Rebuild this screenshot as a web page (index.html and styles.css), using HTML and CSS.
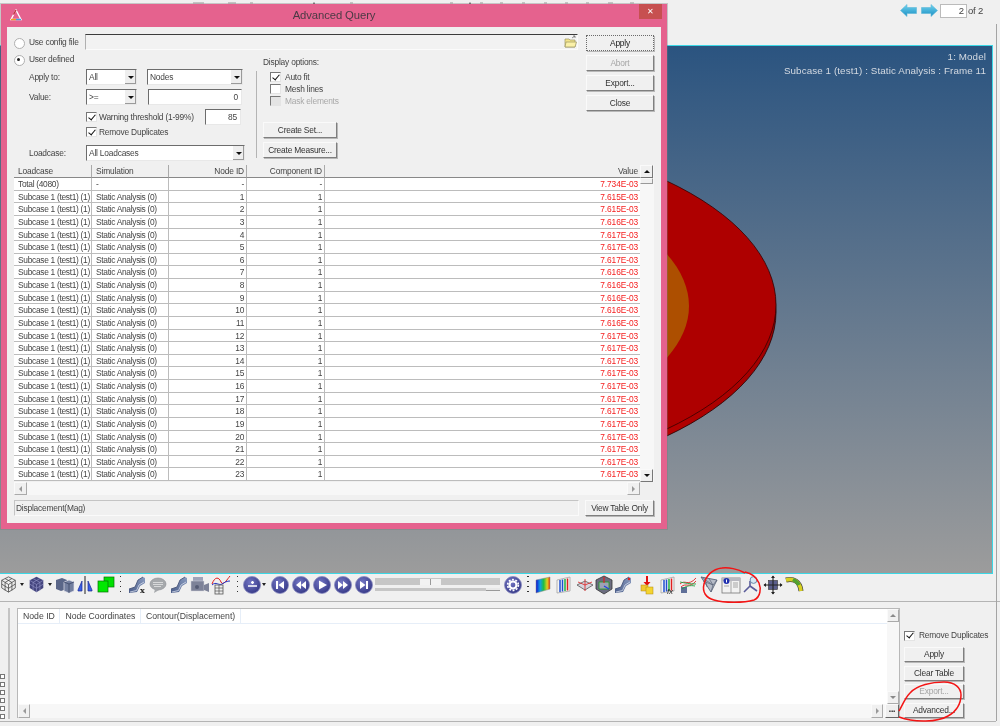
FILE: index.html
```html
<!DOCTYPE html>
<html lang="en">
<head>
<meta charset="utf-8">
<title>Advanced Query</title>
<link rel="stylesheet" href="styles.css">
</head>
<body>
<svg class="defs" aria-hidden="true">
  <defs>
    <radialGradient id="navy" cx="40%" cy="35%" r="75%"><stop offset="0" stop-color="#7376c4"/><stop offset="1" stop-color="#2f3280"/></radialGradient>
    <linearGradient id="rainbow" x1="0" x2="1" y1="0" y2="0"><stop offset="0" stop-color="#1010d0"/><stop offset=".3" stop-color="#10a0e0"/><stop offset=".55" stop-color="#20c040"/><stop offset=".8" stop-color="#e0d020"/><stop offset="1" stop-color="#e03010"/></linearGradient>
    <linearGradient id="arrow" x1="0" x2="0" y1="0" y2="1"><stop offset="0" stop-color="#6fd3ee"/><stop offset="1" stop-color="#1c8fc4"/></linearGradient>
    <linearGradient id="slate" x1="0" x2="1" y1="1" y2="0"><stop offset="0" stop-color="#4a5c88"/><stop offset="1" stop-color="#8a9cc0"/></linearGradient>
    <linearGradient id="rim" x1="0" x2="1" y1="0" y2="0"><stop offset=".6" stop-color="#d80000"/><stop offset="1" stop-color="#a00000"/></linearGradient>
    <symbol id="disc" viewBox="0 0 20 20"><circle cx="10" cy="10" r="8.5" fill="url(#navy)" stroke="#8a8cc0" stroke-width=".8"/></symbol>
    <symbol id="ramp" viewBox="0 0 20 20"><path d="M2 18 L2 14 L8 12 L11 5 L16 2 L18 3 L18 8 L13 11 L10 17 Z" fill="url(#slate)"/><path d="M2 14 L8 12 L11 5 L16 2" fill="none" stroke="#3c4a70" stroke-width=".8"/><path d="M3 17 L9.500 15.500 L12 10 L17 7" fill="none" stroke="#c8d0e2" stroke-width=".9"/></symbol>
    <symbol id="bars" viewBox="0 0 20 20"><path d="M3 5 L16 2 V16 L3 18 Z" fill="#f4f4f4" stroke="#999" stroke-width=".7"/><path d="M6 5 V17 M8.500 4.500 V16.500" stroke="#2050d0" stroke-width="1.500"/><path d="M11 4 V16" stroke="#20b040" stroke-width="1.500"/><path d="M13.500 3.500 V15.500" stroke="#e02020" stroke-width="1.500"/></symbol>
  </defs>
</svg>

<header class="topbar">
  <div class="pager">
    <svg class="pager-arrow" viewBox="0 0 17 13"><path d="M0.500 6.500 L7 .5 V3.500 H16.500 V9.500 H7 V12.500 Z" fill="url(#arrow)" stroke="#5fb8d8" stroke-width=".6"/></svg>
    <svg class="pager-arrow" viewBox="0 0 17 13"><path d="M16.500 6.500 L10 .5 V3.500 H.5 V9.500 H10 V12.500 Z" fill="url(#arrow)" stroke="#5fb8d8" stroke-width=".6"/></svg>
    <span class="pager-input">2</span>
    <span class="pager-of">of 2</span>
  </div>
</header>

<main class="viewport">
  <svg class="model" viewBox="0 0 992 527" aria-hidden="true">
    <ellipse cx="400" cy="266" rx="376" ry="176" fill="url(#rim)" stroke="#200" stroke-width=".8"/>
    <ellipse cx="400" cy="259" rx="376" ry="176" fill="#ae0000" stroke="#300" stroke-width=".8"/>
    <ellipse cx="400" cy="260" rx="289" ry="135" fill="#ad4f00"/>
  </svg>
  <div class="viewport-label">
    <div>1: Model</div>
    <div>Subcase 1 (test1) : Static Analysis : Frame 11</div>
  </div>
</main>

<section class="dialog">
  <div class="dialog-title">
    <svg class="dialog-logo" viewBox="0 0 12 12"><path d="M6 1 L11 10.500 H1 Z" fill="none" stroke="#fff" stroke-width="1.400"/><path d="M6 1 L3.500 5.700" stroke="#c03040" stroke-width="1.400"/><path d="M1 10.500 H6" stroke="#f0a020" stroke-width="1.400"/><path d="M6 10.500 H11" stroke="#40a0e0" stroke-width="1.400"/></svg>
    <span class="dialog-name">Advanced Query</span>
    <span class="dialog-close">✕</span>
  </div>
  <div class="dialog-client">
    <div class="upper">
      <div class="upper-main">
        <div class="config-row">
          <span class="radio"></span>
          <span class="config-label">Use config file</span>
          <div class="field config-field">
            <svg class="folder" viewBox="0 0 13 13"><path d="M1 4 H5 L6 5 H11 V12 H1 Z" fill="#f4e58a" stroke="#9a9460" stroke-width=".7"/><path d="M2 7 H12.500 L11 12 H1 Z" fill="#fbf1a8" stroke="#9a9460" stroke-width=".7"/><path d="M8 3 L11 1 M11 1 V3 M11 1 H9" stroke="#666" stroke-width=".7" fill="none"/></svg>
          </div>
        </div>
        <div class="form-split">
          <div class="form-left">
            <div class="userdef-row"><span class="radio on"></span><span>User defined</span></div>
            <div class="form-row r20">
              <span class="form-label">Apply to:</span>
              <div class="select s51"><span>All</span><i class="drop"></i></div>
              <div class="select s96"><span>Nodes</span><i class="drop"></i></div>
            </div>
            <div class="form-row r20">
              <span class="form-label">Value:</span>
              <div class="select s51"><span>&gt;=</span><i class="drop"></i></div>
              <div class="field num s94">0</div>
            </div>
            <div class="form-row r17">
              <span class="form-label"></span>
              <label class="check wide"><i class="box on"></i><span>Warning threshold (1-99%)</span></label>
              <div class="field num s36">85</div>
            </div>
            <div class="form-row r19">
              <span class="form-label"></span>
              <label class="check"><i class="box on"></i><span>Remove Duplicates</span></label>
            </div>
            <div class="form-row">
              <span class="form-label">Loadcase:</span>
              <div class="select s159"><span>All Loadcases</span><i class="drop"></i></div>
            </div>
          </div>
          <div class="form-divider"></div>
          <div class="options">
            <div class="options-title">Display options:</div>
            <div class="options-checks">
              <label class="check"><i class="box on"></i><span>Auto fit</span></label>
              <label class="check"><i class="box"></i><span>Mesh lines</span></label>
              <label class="check disabled"><i class="box dis"></i><span>Mask elements</span></label>
            </div>
            <div class="options-buttons">
              <button class="btn">Create Set...</button>
              <button class="btn">Create Measure...</button>
            </div>
          </div>
        </div>
      </div>
      <div class="upper-side">
        <button class="btn focus">Apply</button>
        <button class="btn off">Abort</button>
        <button class="btn">Export...</button>
        <button class="btn">Close</button>
      </div>
    </div>

    <div class="results">
      <div class="results-main">
        <div class="results-table">
          <div class="tr head"><div>Loadcase</div><div>Simulation</div><div class="n">Node ID</div><div class="n">Component ID</div><div class="n">Value</div></div>
          <div class="tr"><div>Total (4080)</div><div>-</div><div class="n">-</div><div class="n">-</div><div class="v">7.734E-03</div></div>
          <div class="tr"><div>Subcase 1 (test1) (1)</div><div>Static Analysis (0)</div><div class="n">1</div><div class="n">1</div><div class="v">7.615E-03</div></div>
          <div class="tr"><div>Subcase 1 (test1) (1)</div><div>Static Analysis (0)</div><div class="n">2</div><div class="n">1</div><div class="v">7.615E-03</div></div>
          <div class="tr"><div>Subcase 1 (test1) (1)</div><div>Static Analysis (0)</div><div class="n">3</div><div class="n">1</div><div class="v">7.616E-03</div></div>
          <div class="tr"><div>Subcase 1 (test1) (1)</div><div>Static Analysis (0)</div><div class="n">4</div><div class="n">1</div><div class="v">7.617E-03</div></div>
          <div class="tr"><div>Subcase 1 (test1) (1)</div><div>Static Analysis (0)</div><div class="n">5</div><div class="n">1</div><div class="v">7.617E-03</div></div>
          <div class="tr"><div>Subcase 1 (test1) (1)</div><div>Static Analysis (0)</div><div class="n">6</div><div class="n">1</div><div class="v">7.617E-03</div></div>
          <div class="tr"><div>Subcase 1 (test1) (1)</div><div>Static Analysis (0)</div><div class="n">7</div><div class="n">1</div><div class="v">7.616E-03</div></div>
          <div class="tr"><div>Subcase 1 (test1) (1)</div><div>Static Analysis (0)</div><div class="n">8</div><div class="n">1</div><div class="v">7.616E-03</div></div>
          <div class="tr"><div>Subcase 1 (test1) (1)</div><div>Static Analysis (0)</div><div class="n">9</div><div class="n">1</div><div class="v">7.616E-03</div></div>
          <div class="tr"><div>Subcase 1 (test1) (1)</div><div>Static Analysis (0)</div><div class="n">10</div><div class="n">1</div><div class="v">7.616E-03</div></div>
          <div class="tr"><div>Subcase 1 (test1) (1)</div><div>Static Analysis (0)</div><div class="n">11</div><div class="n">1</div><div class="v">7.616E-03</div></div>
          <div class="tr"><div>Subcase 1 (test1) (1)</div><div>Static Analysis (0)</div><div class="n">12</div><div class="n">1</div><div class="v">7.617E-03</div></div>
          <div class="tr"><div>Subcase 1 (test1) (1)</div><div>Static Analysis (0)</div><div class="n">13</div><div class="n">1</div><div class="v">7.617E-03</div></div>
          <div class="tr"><div>Subcase 1 (test1) (1)</div><div>Static Analysis (0)</div><div class="n">14</div><div class="n">1</div><div class="v">7.617E-03</div></div>
          <div class="tr"><div>Subcase 1 (test1) (1)</div><div>Static Analysis (0)</div><div class="n">15</div><div class="n">1</div><div class="v">7.617E-03</div></div>
          <div class="tr"><div>Subcase 1 (test1) (1)</div><div>Static Analysis (0)</div><div class="n">16</div><div class="n">1</div><div class="v">7.617E-03</div></div>
          <div class="tr"><div>Subcase 1 (test1) (1)</div><div>Static Analysis (0)</div><div class="n">17</div><div class="n">1</div><div class="v">7.617E-03</div></div>
          <div class="tr"><div>Subcase 1 (test1) (1)</div><div>Static Analysis (0)</div><div class="n">18</div><div class="n">1</div><div class="v">7.617E-03</div></div>
          <div class="tr"><div>Subcase 1 (test1) (1)</div><div>Static Analysis (0)</div><div class="n">19</div><div class="n">1</div><div class="v">7.617E-03</div></div>
          <div class="tr"><div>Subcase 1 (test1) (1)</div><div>Static Analysis (0)</div><div class="n">20</div><div class="n">1</div><div class="v">7.617E-03</div></div>
          <div class="tr"><div>Subcase 1 (test1) (1)</div><div>Static Analysis (0)</div><div class="n">21</div><div class="n">1</div><div class="v">7.617E-03</div></div>
          <div class="tr"><div>Subcase 1 (test1) (1)</div><div>Static Analysis (0)</div><div class="n">22</div><div class="n">1</div><div class="v">7.617E-03</div></div>
          <div class="tr"><div>Subcase 1 (test1) (1)</div><div>Static Analysis (0)</div><div class="n">23</div><div class="n">1</div><div class="v">7.617E-03</div></div>
        </div>
        <div class="vscroll">
          <span class="sb-btn"><i class="tri up"></i></span>
          <span class="sb-thumb"></span>
          <span class="sb-track"></span>
          <span class="sb-btn"><i class="tri down"></i></span>
        </div>
      </div>
      <div class="hscroll">
        <span class="sb-btn flat"><i class="tri left"></i></span>
        <span class="sb-track"></span>
        <span class="sb-btn flat"><i class="tri right"></i></span>
        <span class="corner"></span>
      </div>
    </div>

    <div class="dialog-foot">
      <div class="status">Displacement(Mag)</div>
      <button class="btn">View Table Only</button>
    </div>
  </div>
</section>

<nav class="toolbar">
  <span class="t w16"><svg viewBox="0 0 20 20"><path d="M10 1 L18 5 V14 L10 19 L2 14 V5 Z M2 5 L10 10 L18 5 M10 10 V19 M6 3 L14 7.500 M14 3 L6 7.500 M2 9.500 L10 14.500 L18 9.500 M6 7.500 V17 M14 7.500 V17" fill="#e4e4e4" fill-opacity=".4" stroke="#444" stroke-width=".9"/></svg></span>
  <span class="t w12"><i class="caret"></i></span>
  <span class="t w16"><svg viewBox="0 0 20 20"><path d="M10 1 L18 5 V14 L10 19 L2 14 V5 Z" fill="#45467f"/><path d="M2 5 L10 10 L18 5 M10 10 V19 M6 3 L14 7.500 M14 3 L6 7.500 M2 9.500 L10 14.500 L18 9.500 M6 7.500 V17 M14 7.500 V17" fill="none" stroke="#8f90c4" stroke-width=".8"/></svg></span>
  <span class="t w12"><i class="caret"></i></span>
  <span class="t w17"><svg viewBox="0 0 20 20"><path d="M1 5 L7 3 L12 5 V14 L6 16 L1 14 Z" fill="#5a6688"/><path d="M9 7 L14 5 L19 7 V16 L14 18 L9 16 Z" fill="#737f9f" stroke="#e4e4ee" stroke-width=".7"/><path d="M9 7 L14 9 L19 7 M14 9 V18" fill="none" stroke="#3b4666" stroke-width=".8"/></svg></span>
  <span class="t w24"><svg viewBox="0 0 20 20"><path d="M7 6 L3 15 V16 H7 Z" fill="#3a60e8" stroke="#1a2a90" stroke-width=".7"/><path d="M13 6 L17 15 V16 H13 Z" fill="#3a60e8" stroke="#1a2a90" stroke-width=".7"/><path d="M10 1 V19" stroke="#222" stroke-width="1"/></svg></span>
  <span class="t w18"><svg viewBox="0 0 20 20"><rect x="8" y="2" width="10" height="10" fill="#00e000" stroke="#067006" stroke-width=".7"/><rect x="2" y="6" width="10" height="11" fill="#00e800" stroke="#067006" stroke-width=".7"/></svg></span>
  <span class="t w11"><i class="dots"></i></span>
  <span class="t"><svg viewBox="0 0 20 20"><use href="#ramp"/><text x="13" y="18" class="svg-x">x</text></svg></span>
  <span class="t"><svg viewBox="0 0 20 20"><ellipse cx="10" cy="9" rx="8" ry="6" fill="#a6a9ac" stroke="#8a8c90" stroke-width=".6"/><path d="M7 14 L6 18 L11 15 Z" fill="#a6a9ac"/><path d="M5 7.500 H15 M5 9.500 H15 M6 11.500 H13" stroke="#eee" stroke-width=".7"/></svg></span>
  <span class="t"><svg viewBox="0 0 20 20"><use href="#ramp"/></svg></span>
  <span class="t"><svg viewBox="0 0 20 20"><rect x="3" y="2" width="10" height="8" fill="#9ea3b8"/><rect x="1" y="6" width="13" height="10" fill="#7d8298" stroke="#d4d4dc" stroke-width=".5"/><path d="M14 10 L19 8 V17 L14 15 Z" fill="#7d8298"/><circle cx="7" cy="12" r="2" fill="#555b74"/></svg></span>
  <span class="t"><svg viewBox="0 0 20 20"><path d="M1 9 C4 1 8 2 10 7 C12 11 15 6 19 1" fill="none" stroke="#e01818" stroke-width="1"/><path d="M1 10 C5 6 8 11 11 9 C14 7 16 6 19 6" fill="none" stroke="#2030c0" stroke-width="1"/><rect x="4" y="10" width="8" height="9" fill="#eee" stroke="#555" stroke-width=".8"/><path d="M8 10 V19 M4 13 H12 M4 16 H12" stroke="#555" stroke-width=".7"/></svg></span>
  <span class="t w13"><i class="dots"></i></span>
  <span class="t w15"><svg viewBox="0 0 20 20"><use href="#disc"/><path d="M6 11 H15 M9 7.500 H12 M10.500 6 V9" stroke="#fff" stroke-width="1.400"/></svg></span>
  <span class="t w10"><i class="caret"></i></span>
  <span class="t"><svg viewBox="0 0 20 20"><use href="#disc"/><path d="M6 6 H8 V14 H6 Z M14 6 V14 L8.500 10 Z" fill="#fff"/></svg></span>
  <span class="t"><svg viewBox="0 0 20 20"><use href="#disc"/><path d="M10 6 V14 L5 10 Z M15 6 V14 L10 10 Z" fill="#fff"/></svg></span>
  <span class="t"><svg viewBox="0 0 20 20"><use href="#disc"/><path d="M7 5.500 V14.500 L15 10 Z" fill="#fff"/></svg></span>
  <span class="t"><svg viewBox="0 0 20 20"><use href="#disc"/><path d="M10 6 V14 L15 10 Z M5 6 V14 L10 10 Z" fill="#fff"/></svg></span>
  <span class="t"><svg viewBox="0 0 20 20"><use href="#disc"/><path d="M14 6 H12 V14 H14 Z M6 6 V14 L11.500 10 Z" fill="#fff"/></svg></span>
  <div class="slider">
    <div class="slider-main"><span class="slider-thumb"></span></div>
    <div class="slider-sub"><span class="slider-mini"></span></div>
  </div>
  <span class="t"><svg viewBox="0 0 20 20"><use href="#disc"/><circle cx="10" cy="10" r="3.500" fill="none" stroke="#fff" stroke-width="2.200"/><circle cx="10" cy="10" r="5.400" fill="none" stroke="#fff" stroke-width="1.600" stroke-dasharray="1.900 1.500"/></svg></span>
  <span class="t w9"><i class="dots"></i></span>
  <span class="t"><svg viewBox="0 0 20 20"><path d="M3 5 L17 2 V14 L3 18 Z" fill="url(#rainbow)" stroke="#888" stroke-width=".5"/></svg></span>
  <span class="t"><svg viewBox="0 0 20 20"><use href="#bars"/></svg></span>
  <span class="t"><svg viewBox="0 0 20 20"><path d="M2 10 L10 6 L18 10 L10 15 Z" fill="#d6d6de" stroke="#555" stroke-width=".8"/><path d="M10 10 V4 M10 10 L3 7 M10 10 L17 7 M10 10 V16" stroke="#e02020" stroke-width=".8"/></svg></span>
  <span class="t w17"><svg viewBox="0 0 20 20"><path d="M10 1 L18 5 V14 L10 19 L2 14 V5 Z" fill="#6b6c80" stroke="#333" stroke-width=".8"/><path d="M5 7 H15 V14 H5 Z" fill="#9ea2b4" stroke="#20a020" stroke-width=".8"/><path d="M10 2 V8" stroke="#e02020" stroke-width="1.200"/><path d="M10 11 L15 14" stroke="#2040e0" stroke-width="1.200"/></svg></span>
  <span class="t"><svg viewBox="0 0 20 20"><use href="#ramp"/><circle cx="16" cy="4" r="1.200" fill="#e02020"/></svg></span>
  <span class="t w27"><svg viewBox="0 0 20 20"><path d="M10 1 V9" stroke="#e01010" stroke-width="2"/><path d="M6.500 7 H13.500 L10 11 Z" fill="#e01010"/><rect x="4" y="10" width="7" height="6" fill="#f0c830" stroke="#b08810" stroke-width=".5"/><rect x="9" y="12" width="7" height="7" fill="#f4d430" stroke="#b08810" stroke-width=".5"/></svg></span>
  <span class="t w15"><svg viewBox="0 0 20 20"><use href="#bars"/><text x="9" y="19" class="svg-fx">fx</text></svg></span>
  <span class="t w25"><svg viewBox="0 0 20 20"><path d="M3 12 H9 V18 H3 Z" fill="#5f6f98"/><path d="M2 9 C7 4 10 12 18 3 M3 12 C8 7 11 14 18 6" fill="none" stroke="#e02020" stroke-width=".9"/><path d="M2 7 C7 8 11 9 18 9 M4 14 C8 11 12 10 17 11" fill="none" stroke="#20a040" stroke-width=".9"/></svg></span>
  <span class="t w17"><svg viewBox="0 0 20 20"><path d="M2 2 L18 5 L12 17 Z" fill="#b6bcc8" stroke="#5a6478" stroke-width=".9"/><path d="M2 2 L14 10 L12 17 M6 3 L8 12 M10 3.500 L14 10 L18 5 M4 6 L14 10" fill="none" stroke="#5a6478" stroke-width=".7"/></svg></span>
  <span class="t w27"><svg viewBox="0 0 20 20"><rect x="1" y="3" width="18" height="15" fill="#f2f2f2" stroke="#777" stroke-width=".8"/><rect x="1" y="3" width="18" height="3" fill="#b8b8c0"/><circle cx="5.500" cy="6" r="3" fill="#2030b0"/><rect x="5" y="4.500" width="1" height="3" fill="#fff"/><path d="M10 6 V18 M12 8 H17 M12 10 H17 M12 12 H17 M3 11 H8" stroke="#888" stroke-width=".7"/></svg></span>
  <span class="t w13"><svg viewBox="0 0 20 20"><path d="M9 11 V6 M9 11 L3 17 M9 11 L16 16" stroke="#5a5c9a" stroke-width="1.600" fill="none"/><circle cx="12.500" cy="5" r="3.400" fill="#d4e8f4" stroke="#6a88a8" stroke-width="1"/></svg></span>
  <span class="t w31"><svg viewBox="0 0 20 20"><rect x="5.500" y="5.500" width="9" height="9" fill="#5a5e8c" stroke="#333" stroke-width=".6"/><path d="M10 1 V19 M1 10 H19" stroke="#222" stroke-width="1.100"/><path d="M8 3 L10 0.500 L12 3 Z M8 17 L10 19.500 L12 17 Z M3 8 L.5 10 L3 12 Z M17 8 L19.500 10 L17 12 Z" fill="#222"/></svg></span>
  <span class="t w10"><svg viewBox="0 0 20 20"><path d="M2 5 C9 3 16 6 17 16" fill="none" stroke="#444" stroke-width="5"/><path d="M2 5 C9 3 16 6 17 16" fill="none" stroke="#d8d020" stroke-width="3.600"/><path d="M9 4.500 C12 6 14 7.500 15 10" fill="none" stroke="#50a030" stroke-width="3.600"/></svg></span>
</nav>

<section class="panel">
  <div class="panel-strip">
    <div class="mini-icons"><i></i><i></i><i></i><i></i><i></i><i></i></div>
    <span class="strip-bar"></span>
  </div>
  <div class="query-table">
    <div class="query-top">
      <div class="query-body">
        <div class="query-head"><span>Node ID</span><span>Node Coordinates</span><span>Contour(Displacement)</span></div>
      </div>
      <div class="vscroll query-v">
        <span class="sb-btn flat"><i class="tri up pale"></i></span>
        <span class="sb-track"></span>
        <span class="sb-btn flat"><i class="tri down pale"></i></span>
      </div>
    </div>
    <div class="hscroll query-h">
      <span class="sb-btn flat"><i class="tri left"></i></span>
      <span class="sb-track"></span>
      <span class="sb-btn flat"><i class="tri right"></i></span>
      <span class="more">...</span>
    </div>
  </div>
  <div class="panel-side">
    <label class="check big"><i class="box on"></i><span>Remove Duplicates</span></label>
    <div class="panel-buttons">
      <button class="btn">Apply</button>
      <button class="btn">Clear Table</button>
      <button class="btn off">Export...</button>
      <button class="btn">Advanced...</button>
    </div>
  </div>
</section>

<span class="page-edge"></span>

<svg class="marks" viewBox="0 0 1000 726" aria-hidden="true">
  <path class="ink" d="M745 573 C738 569 728 567 722 568 C712 569 706 576 704 584 C702 592 706 598 714 600 C724 603 744 603 754 600 C761 597 761 588 759 583 C756 576 750 573 745 572"/>
  <path class="ink" d="M899 711 C902 706 905 698 910 693 C917 685 932 682 944 682 C955 682 961 688 961 695 C961 704 956 712 948 716 C938 722 915 723 899 717"/>
  <path class="ticks" d="M314 2.500 V4 M470 2.500 V4"/>
  <path class="ticks faint" d="M193 3 H204 M228 3 H236 M250 3 H253 M350 3 H353 M450 3 H453 M480 3 H483 M500 3 H503 M522 3 H525 M544 3 H547 M565 3 H568 M586 3 H589 M608 3 H613 M630 3 H634"/>
</svg>
</body>
</html>
```
FILE: styles.css
```css
* { box-sizing: border-box; }
html, body { margin: 0; padding: 0; }
body {
  width: 1000px;
  height: 726px;
  overflow: hidden;
  position: relative;
  background: #f0f0f0;
  color: #444;
  font: 8.4px/1 "Liberation Sans", Arial, sans-serif;
  letter-spacing: -.2px;
  display: flex;
  flex-direction: column;
  filter: blur(.4px);
}
.defs { position: absolute; width: 0; height: 0; }
button { font: inherit; color: inherit; letter-spacing: inherit; padding: 0; margin: 0; }
label { display: block; }

/* top bar */
.topbar { height: 45px; flex: none; display: flex; justify-content: flex-end; padding-top: 4px; padding-right: 17px; }
.pager { display: flex; align-items: flex-start; height: 14px; font-size: 9.5px; letter-spacing: 0; }
.pager-arrow { width: 17px; height: 13px; margin-right: 4px; }
.pager-arrow + .pager-arrow { margin-right: 2px; }
.pager-input { width: 27px; height: 14px; background: #fff; border: 1px solid #bbb; text-align: right; padding: 1px 2px 0 0; }
.pager-of { width: 16px; padding: 2px 0 0 1px; letter-spacing: -.2px; white-space: nowrap; }

/* viewport */
.viewport {
  height: 529px;
  flex: none;
  width: 993px;
  position: relative;
  border: 1px solid #3bd8e6;
  border-left: 0;
  background: linear-gradient(#2b5480, #9c9c9c);
}
.model { position: absolute; left: 0; top: 0; width: 992px; height: 527px; }
.viewport-label { position: relative; padding: 4px 6px 0 0; text-align: right; color: #d4dae2; font-size: 9.8px; line-height: 14px; letter-spacing: .1px; }

/* dialog window */
.dialog {
  position: absolute;
  left: 1px;
  top: 4px;
  width: 666px;
  height: 525px;
  background: #e5628e;
  padding: 0 6px 6px;
  display: flex;
  flex-direction: column;
  box-shadow: 0 0 0 1px rgba(120, 120, 120, .35);
}
.dialog-title { height: 23px; flex: none; display: grid; grid-template-columns: 1fr auto 1fr; align-items: start; }
.dialog-logo { width: 12px; height: 12px; margin: 5px 0 0 3px; }
.dialog-name { font-size: 11.3px; color: #4a3a44; padding-top: 6px; letter-spacing: -.1px; }
.dialog-close { justify-self: end; width: 23px; height: 15px; background: #c75050; color: #fff; font-size: 8px; line-height: 15px; text-align: center; margin-right: -1px; letter-spacing: 0; }
.dialog-client { flex: 1; background: #f0f0f0; padding: 7px 7px 7px; display: flex; flex-direction: column; }

.upper { display: flex; height: 131px; flex: none; gap: 8px; }
.upper-main { width: 564px; display: flex; flex-direction: column; }
.upper-side { width: 68px; display: flex; flex-direction: column; gap: 4px; padding-top: 1px; }
.upper-side .btn { height: 16px; }

.config-row { height: 16px; display: flex; align-items: center; flex: none; }
.config-label { width: 56px; }
.config-field { flex: 1; height: 16px; display: flex; justify-content: flex-end; }
.folder { width: 13px; height: 13px; background: #f4f4f4; }

.radio { width: 15px; flex: none; height: 9px; position: relative; display: block; }
.radio::before { content: ""; position: absolute; left: 0; top: 0; width: 9px; height: 9px; border-radius: 50%; background: #fff; border: 1px solid #b0b0b0; }
.radio.on::after { content: ""; position: absolute; left: 3px; top: 3px; width: 3px; height: 3px; border-radius: 50%; background: #222; }

.form-split { display: flex; flex: 1; }
.form-left { width: 242px; flex: none; padding-top: 1px; }
.userdef-row { display: flex; align-items: center; height: 16px; margin-bottom: 2px; }
.form-row { display: flex; height: 16px; align-items: flex-start; padding-left: 15px; }
.form-row.r20 { height: 20px; }
.form-row.r17 { height: 17px; }
.form-row.r19 { height: 19px; }
.form-label { width: 57px; flex: none; line-height: 16px; }

.field { background: #fff; border: 1px solid #e8e8e8; border-top-color: #6c6c6c; border-left-color: #6c6c6c; height: 16px; }
.config-field { background: #f2f2f2; border-color: #3c3c3c #fbfbfb #fbfbfb #b0b0b0; }
.num { text-align: right; padding: 3px 3px 0 0; line-height: 1; }
.s94 { width: 94px; margin-left: 11px; }
.s36 { width: 36px; }
.select { display: flex; justify-content: space-between; align-items: center; height: 16px; background: #fff; border: 1px solid #e8e8e8; border-top-color: #6c6c6c; border-left-color: #6c6c6c; padding-left: 2px; }
.s51 { width: 51px; }
.s96 { width: 96px; margin-left: 10px; }
.s159 { width: 159px; }
.drop { width: 12px; height: 14px; background: #eee; border-left: 1px solid #fff; box-shadow: inset -1px -1px 0 #9a9a9a; position: relative; flex: none; }
.drop::after { content: ""; position: absolute; left: 3px; top: 6px; border: 3px solid transparent; border-top: 3px solid #111; border-bottom: 0; }

.check { display: flex; align-items: center; gap: 2px; height: 12px; }
.check.wide { width: 119px; height: 16px; }
.check.disabled { color: #a8a8a8; }
.box { width: 11px; height: 10px; flex: none; background: #fff; border: 1px solid #a0a0a0; border-color: #777 #e4e4e4 #e4e4e4 #777; position: relative; display: block; }
.box.dis { background: #e4e4e4; }
.box.on::after { content: ""; position: absolute; left: 2.500px; top: -.5px; width: 3px; height: 6px; border: solid #111; border-width: 0 1.600px 1.600px 0; transform: rotate(40deg); }

.form-divider { width: 1px; flex: none; height: 87px; margin-top: 21px; background: #b4b4b4; }
.options { padding: 6px 0 0 6px; }
.options-title { height: 15px; line-height: 12px; }
.options-checks { padding-left: 7px; display: flex; flex-direction: column; margin-bottom: 15px; }
.options-checks .check { gap: 4px; height: 12px; width: 90px; }
.options-buttons { display: flex; flex-direction: column; gap: 4px; }
.options-buttons .btn { width: 74px; height: 16px; }

.btn {
  display: block;
  background: #f0f0f0;
  border: 1px solid;
  border-color: #fafafa #7f7f7f #7f7f7f #fafafa;
  box-shadow: 1px 1px 0 #b8b8b8;
  text-align: center;
  color: #333;
  white-space: nowrap;
}
.btn.off { color: #a6a6a6; }
.btn.focus { border-color: #6a6a6a; border-style: dotted; color: #222; }

/* results table */
.results { flex: none; display: flex; flex-direction: column; height: 330px; }
.results-main { display: flex; height: 317px; flex: none; }
.results-table { flex: 1; overflow: hidden; background: #f0f0f0; }
.tr { display: grid; grid-template-columns: 78px 77px 78px 78px 1fr; height: 12.63px; letter-spacing: -.3px; }
.tr > div { background: #fff; border-right: 1px solid #bcbcbc; border-bottom: 1px solid #bcbcbc; padding: 0 2px 0 4px; white-space: nowrap; overflow: hidden; line-height: 13.400px; }
.tr > div:last-child { border-right: 0; }
.tr.head { height: 13px; letter-spacing: -.15px; }
.tr.head > div { background: #f0f0f0; border-right-color: #aaa; border-bottom: 1px solid #888; line-height: 13px; }
.n { text-align: right; }
.tr > .v { text-align: right; color: #f52020; letter-spacing: -.1px; }

.vscroll { width: 14px; flex: none; display: flex; flex-direction: column; background: #f6f6f6; }
.sb-btn { width: 13px; height: 13px; flex: none; background: #f0f0f0; border: 1px solid; border-color: #fafafa #777 #777 #fafafa; display: flex; align-items: center; justify-content: center; }
.sb-btn.flat { border-color: #fafafa #aaa #aaa #fafafa; }
.sb-thumb { width: 13px; height: 6px; background: #f0f0f0; border: 1px solid; border-color: #fafafa #999 #999 #fafafa; flex: none; }
.sb-track { flex: 1; background: #f7f7f7; }
.tri { width: 0; height: 0; border: 3px solid transparent; display: block; }
.tri.up { border-bottom-color: #111; border-top: 0; }
.tri.down { border-top-color: #111; border-bottom: 0; }
.tri.left { border-right-color: #999; border-left: 0; }
.tri.right { border-left-color: #999; border-right: 0; }
.tri.pale.up { border-bottom-color: #8a8a8a; }
.tri.pale.down { border-top-color: #8a8a8a; }
.hscroll { display: flex; height: 13px; flex: none; background: #f7f7f7; }
.corner { width: 14px; background: #f0f0f0; flex: none; }

.dialog-foot { display: flex; justify-content: space-between; margin-top: 5px; height: 16px; }
.status { width: 565px; border: 1px solid; border-color: #c4c4c4 #fafafa #fafafa #c4c4c4; padding: 3px 0 0 1px; background: #f0f0f0; }
.dialog-foot .btn { width: 69px; height: 16px; }

/* toolbar */
.toolbar { height: 28px; flex: none; display: flex; align-items: flex-start; border-bottom: 1px solid #b4b4b4; }
.t { width: 21px; height: 21px; flex: none; display: flex; align-items: center; justify-content: center; overflow: visible; }
.t svg { width: 20px; height: 20px; flex: none; overflow: visible; }
.w9 { width: 9px; } .w10 { width: 10px; } .w11 { width: 11px; } .w12 { width: 12px; } .w13 { width: 13px; }
.w15 { width: 15px; } .w16 { width: 16px; } .w17 { width: 17px; } .w18 { width: 18px; } .w24 { width: 24px; }
.w25 { width: 25px; } .w27 { width: 27px; } .w31 { width: 31px; }
.t.w16 svg { width: 17px; height: 17px; }
.caret { width: 0; height: 0; border: 2.500px solid transparent; border-top: 3px solid #222; border-bottom: 0; display: block; }
.dots { width: 1.500px; height: 18px; background: repeating-linear-gradient(#333 0 1.500px, transparent 1.500px 5px); display: block; }
.svg-x { font: bold 8px "DejaVu Serif", serif; fill: #222; }
.svg-fx { font: italic 8px "Liberation Sans", sans-serif; fill: #222; }

.slider { width: 125px; flex: none; padding-top: 4px; margin-right: 3px; margin-left: .5px; display: flex; flex-direction: column; gap: 3px; }
.slider-main { height: 7px; background: #c6c6c6; padding-left: 45px; }
.slider-thumb { display: block; width: 21px; height: 6px; margin-top: 1px; background: linear-gradient(90deg, #f2f2f2 48%, #999 48% 52%, #f2f2f2 52%); }
.slider-sub { height: 3px; background: #c6c6c6; display: flex; justify-content: flex-end; }
.slider-mini { width: 14px; background: #e8e8e8; border-bottom: 1px solid #999; }

/* lower panel */
.panel { flex: none; height: 120px; width: 996px; display: flex; border-bottom: 1px solid #b4b4b4; padding-top: 6px; }
.panel-strip { width: 17px; flex: none; display: flex; justify-content: space-between; }
.mini-icons { width: 6px; display: flex; flex-direction: column; justify-content: flex-end; gap: 3px; padding-bottom: 2px; }
.mini-icons i { width: 5px; height: 5px; border: 1px solid #777; background: #fff; display: block; }
.strip-bar { width: 2px; height: 111px; background: #c4c4c4; margin-right: 7px; }
.query-table { width: 883px; flex: none; height: 110px; display: flex; flex-direction: column; border: 1px solid #b8b8b8; border-bottom: 0; background: #fff; }
.query-top { flex: 1; display: flex; min-height: 0; }
.query-body { flex: 1; background: #fff; }
.query-head { display: flex; height: 15px; border-bottom: 1px solid #e6eef8; color: #444; font-size: 8.700px; line-height: 14px; letter-spacing: 0; }
.query-head span { padding: 0 4.500px 0 5px; border-right: 1px solid #e6eef8; }
.query-v { width: 12px; }
.query-v .sb-btn { width: 12px; }
.query-h { height: 14px; }
.query-h .sb-btn { width: 12px; height: 14px; }
.more { width: 14px; background: #eee; border: 1px solid; border-color: #fafafa #666 #666 #fafafa; color: #111; font-weight: bold; line-height: 8px; text-align: center; flex: none; margin-left: 2px; }
.panel-side { flex: 1; padding: 22px 0 0 4px; }
.check.big { gap: 4px; height: 11px; white-space: nowrap; }
.panel-buttons { display: flex; flex-direction: column; margin-top: 6px; gap: 3.600px; }
.panel-buttons .btn { width: 60px; height: 15px; }

.page-edge { position: absolute; left: 996px; top: 24px; bottom: 5px; width: 1px; background: #a4a4a4; }
.marks { position: absolute; left: 0; top: 0; width: 1000px; height: 726px; pointer-events: none; }
.ink { fill: none; stroke: #f41414; stroke-width: 1.500; }
.ticks { fill: none; stroke: #222; stroke-width: 1; }
.ticks.faint { stroke: #999; }
```
